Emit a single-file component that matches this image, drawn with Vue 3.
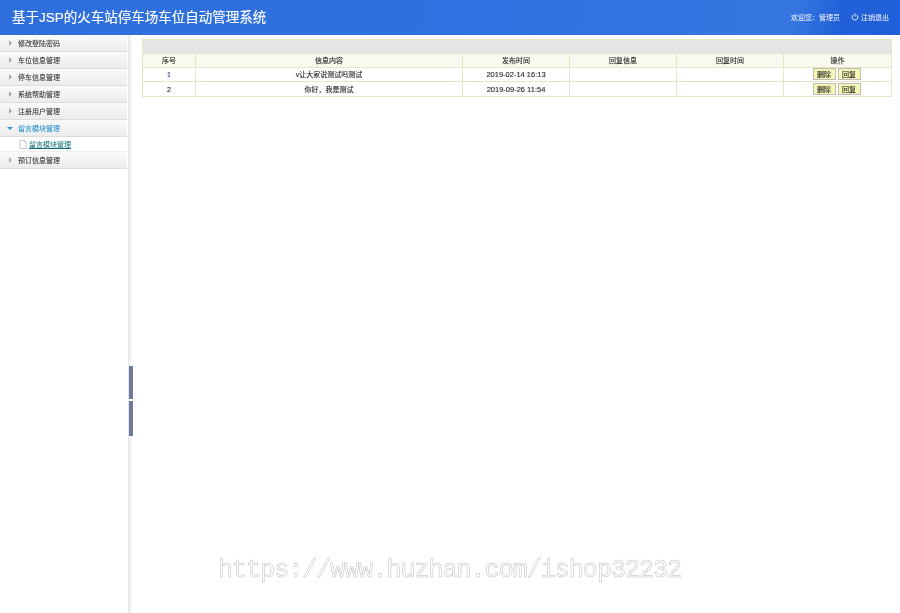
<script setup>
const menus = [
  { name: '修改登陆密码' },
  { name: '车位信息管理' },
  { name: '停车信息管理' },
  { name: '系统帮助管理' },
  { name: '注册用户管理' },
  { name: '留言模块管理', open: true, sub: '留言模块管理' },
  { name: '预订信息管理' }
]
const heads = ['序号', '信息内容', '发布时间', '回复信息', '回复时间', '操作']
const rows = [
  { id: 1, text: 'v让大家说测试吗测试', time: '2019-02-14 16:13', visited: true },
  { id: 2, text: '你好，我是测试', time: '2019-09-26 11:54' }
]
</script>

<template>
  <div class="page">
    <header class="top">
      <h1 class="title">基于JSP的火车站停车场车位自动管理系统</h1>
      <div class="user">
        <span>欢迎您：管理员</span>
        <span class="logout">
          <svg class="power" viewBox="0 0 10 10" width="8" height="8">
            <path d="M3 2.2A3.6 3.6 0 1 0 7 2.2" fill="none" stroke="#fff" stroke-width="1.1" />
            <path d="M5 .6V4.6" fill="none" stroke="#fff" stroke-width="1.1" />
          </svg>
          注销退出
        </span>
      </div>
    </header>
    <div class="body">
      <aside class="side">
        <template v-for="m in menus" :key="m.name">
          <div class="item" :class="{ open: m.open }">
            <i class="arrow"></i>
            <span>{{ m.name }}</span>
          </div>
          <div v-if="m.sub" class="sub">
            <svg class="doc" viewBox="0 0 8 10" width="8" height="9">
              <path d="M.5.5H5.5L7.5 2.5V9.5H.5Z" fill="#fff" stroke="#aaa" stroke-width=".7" />
              <path d="M5.5.5V2.5H7.5" fill="#eee" stroke="#aaa" stroke-width=".5" />
            </svg>
            <a class="sublink">{{ m.sub }}</a>
          </div>
        </template>
      </aside>
      <div class="splitter">
        <i class="handle"></i>
      </div>
      <main class="main">
        <table class="grid">
          <colgroup>
            <col class="c1" /><col class="c2" /><col class="c3" /><col class="c4" /><col class="c5" /><col class="c6" />
          </colgroup>
          <thead>
            <tr class="caption"><th colspan="6"></th></tr>
            <tr class="heads"><th v-for="h in heads" :key="h">{{ h }}</th></tr>
          </thead>
          <tbody>
            <tr v-for="r in rows" :key="r.id">
              <td :class="{ visited: r.visited }">{{ r.id }}</td>
              <td>{{ r.text }}</td>
              <td class="time">{{ r.time }}</td>
              <td></td>
              <td></td>
              <td class="ops">
                <button class="btn">删除</button>
                <button class="btn">回复</button>
              </td>
            </tr>
          </tbody>
        </table>
      </main>
    </div>
    <div class="mark">https://www.huzhan.com/ishop32232</div>
  </div>
</template>

<style>
html, body { margin: 0; padding: 0; background: #fff; }
</style>

<style scoped>
.page {
  position: relative;
  width: 900px;
  height: 613px;
  overflow: hidden;
  font-family: "Liberation Sans", "Noto Sans CJK SC", sans-serif;
  font-size: 7px;
  color: #222;
  background: #fff;
  filter: blur(0.3px);
}
.top {
  height: 35px;
  box-sizing: border-box;
  padding: 0 11px 0 12px;
  display: flex;
  align-items: center;
  justify-content: space-between;
  color: #fff;
  background: linear-gradient(100deg, #2f6fdc 0%, #2f71e0 55%, #3676e0 88%, #2260d8 93%, #1f5fd8 100%);
}
.title {
  margin: 0;
  font-size: 13.5px;
  line-height: 20px;
  font-weight: 400;
  color: #fff;
  -webkit-text-stroke: 0.15px #fff;
}
.user {
  display: flex;
  align-items: center;
  gap: 11px;
  margin-bottom: 2px;
  font-size: 7px;
  color: #f4f7ff;
}
.logout { display: flex; align-items: center; gap: 2px; }
.power { display: block; }
.body { display: flex; height: 578px; }
.side { width: 127px; flex: none; }
.item {
  height: 17px;
  box-sizing: border-box;
  padding-left: 9px;
  display: flex;
  align-items: center;
  gap: 6px;
  color: #333;
  -webkit-text-stroke: 0.08px currentColor;
  border-bottom: 1px solid #dcdcdc;
  background: linear-gradient(#fafafa, #ececec);
}
.arrow {
  width: 0;
  height: 0;
  border-style: solid;
  border-width: 3px 0 3px 3px;
  border-color: transparent transparent transparent #aaa;
}
.item.open { color: #2f95d0; }
.item.open .arrow {
  margin-left: -2px;
  margin-right: -1px;
  border-width: 3px 3px 0 3px;
  border-color: #2f9fd8 transparent transparent transparent;
}
.sub {
  height: 15px;
  box-sizing: border-box;
  padding-left: 19px;
  display: flex;
  align-items: center;
  gap: 2px;
  border-bottom: 1px solid #eee;
}
.sublink {
  color: #0f6f75;
  text-decoration: underline;
}
.doc { display: block; }
.splitter {
  position: relative;
  width: 14px;
  flex: none;
  margin-left: 1px;
  background: linear-gradient(90deg, #e4e4e4 0, #f4f4f4 2px, #fff 5px);
}
.handle {
  position: absolute;
  left: 1px;
  top: 331px;
  width: 4px;
  height: 70px;
  background: linear-gradient(#6f7a9c 0 33px, #fff 33px 35px, #6f7a9c 35px);
}
.main { flex: 1; padding: 4px 9px 0 0; }
.grid {
  width: 749px;
  table-layout: fixed;
  border-collapse: collapse;
  border-right: 1px solid #e4e6c8;
}
.c1 { width: 53px; }
.c2 { width: 267px; }
.c3, .c4, .c5 { width: 107px; }
.c6 { width: 108px; }
.grid th, .grid td {
  padding: 0;
  text-align: center;
  font-weight: 400;
  color: #222;
  -webkit-text-stroke: 0.1px currentColor;
  border: 1px solid #e4e6c8;
}
.caption th {
  height: 13px;
  background: #e5e5e5;
}
.heads th {
  height: 13px;
  line-height: 13px;
  background: #f9f9f0;
}
.grid td {
  height: 13px;
  line-height: 13px;
  background: #fff;
}
.grid tr:last-child td { height: 14px; }
.grid td.visited { color: #551a8b; }
.grid td.time { font-size: 7.5px; }
.grid td.ops { white-space: nowrap; padding-right: 2px; }
.btn {
  width: 23px;
  height: 12px;
  margin: -2px 1px 0;
  padding: 0;
  box-sizing: border-box;
  font: 7px "Liberation Sans", "Noto Sans CJK SC", sans-serif;
  color: #222;
  vertical-align: middle;
  background: #f7f7b4;
  border: 1px solid #bcbcbc;
}
.mark {
  position: absolute;
  left: 218px;
  top: 556px;
  font-family: "Liberation Mono", monospace;
  font-size: 25px;
  letter-spacing: -0.97px;
  line-height: 30px;
  white-space: nowrap;
  color: #fff;
  -webkit-text-stroke: 0.5px #bcbcbc;
}
</style>
